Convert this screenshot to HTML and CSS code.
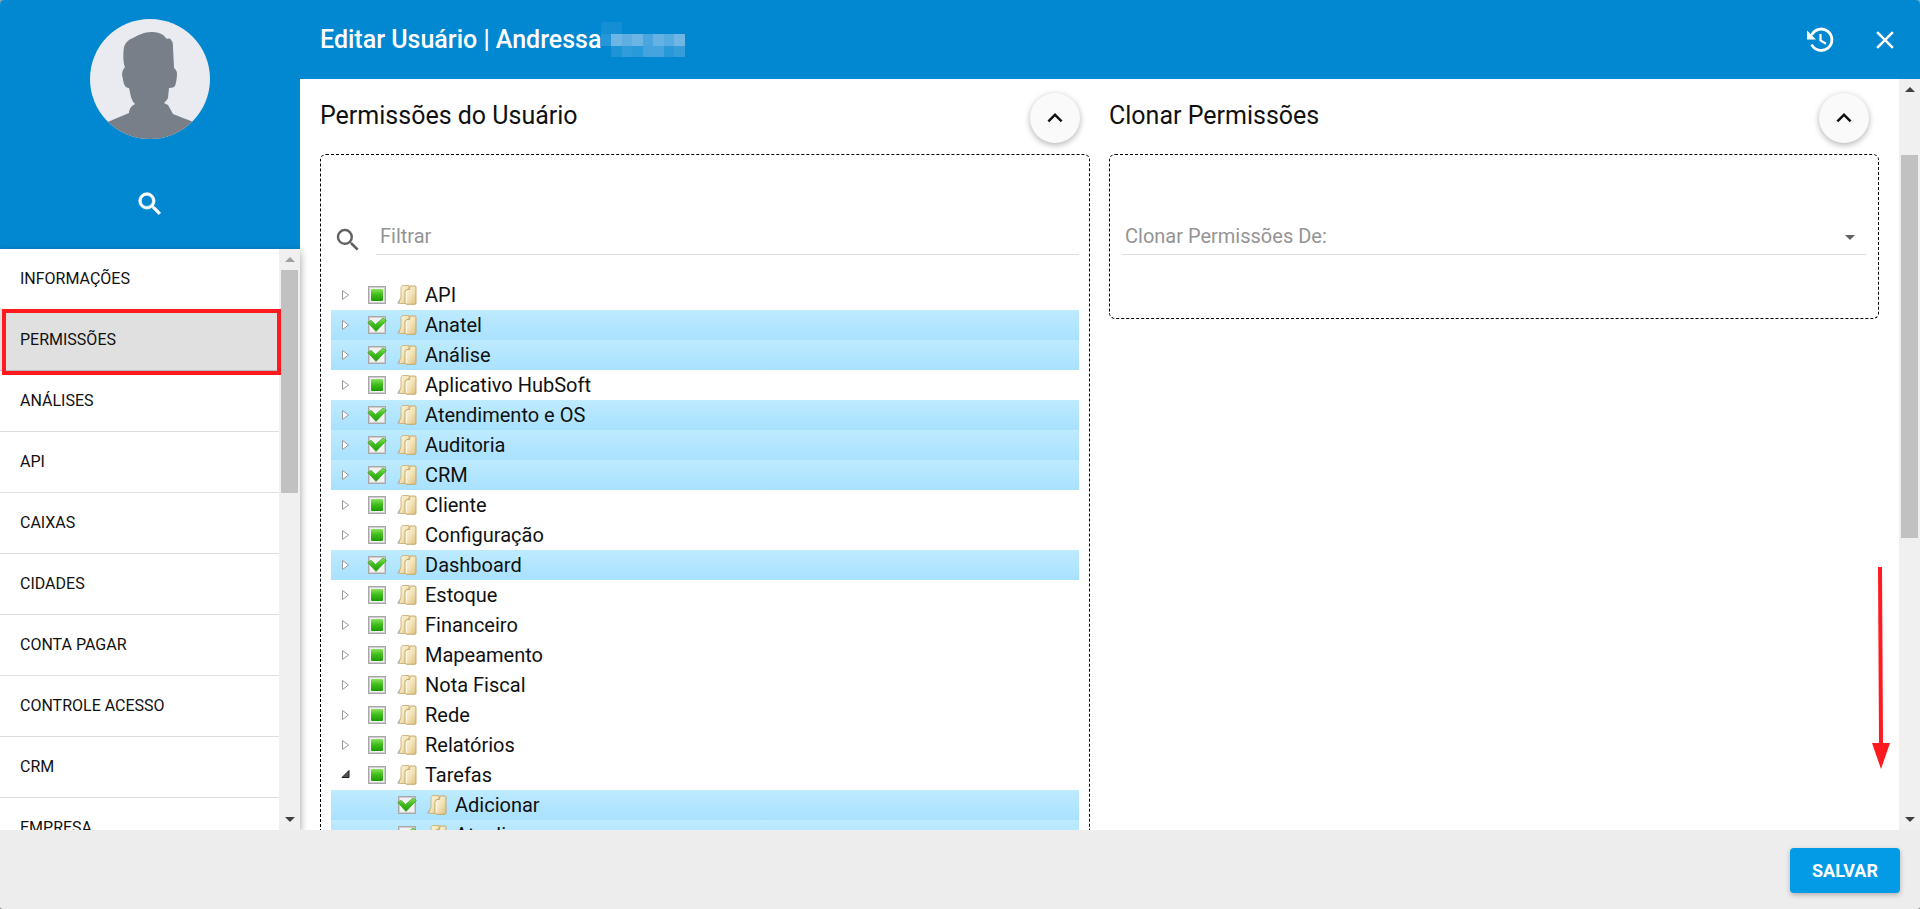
FILE: index.html
```
<!DOCTYPE html>
<html lang="pt-BR">
<head>
  <meta charset="UTF-8">
  <meta name="viewport" content="width=device-width, initial-scale=1.0">
  <title>Editar Usuário</title>
  <link rel="stylesheet" href="styles.css">
</head>
<body>
  <!-- Icon sprite -->
  <svg class="sprite" aria-hidden="true">
    <defs>
      <linearGradient id="green" x1="0" y1="0" x2="0" y2="1">
        <stop offset="0" stop-color="#8be05f"/>
        <stop offset="0.45" stop-color="#3fbf1c"/>
        <stop offset="1" stop-color="#1f9a08"/>
      </linearGradient>
      <linearGradient id="tan" x1="0" y1="0" x2="1" y2="1">
        <stop offset="0" stop-color="#fdf8e4"/>
        <stop offset="0.5" stop-color="#f3e4b8"/>
        <stop offset="1" stop-color="#dcbf7e"/>
      </linearGradient>
    </defs>
    <symbol id="i-search" viewBox="0 0 24 24">
      <path d="M15.5 14h-.79l-.28-.27A6.47 6.47 0 0 0 16 9.5 6.5 6.5 0 1 0 9.5 16c1.61 0 3.09-.59 4.23-1.57l.27.28v.79l5 4.99L20.49 19l-4.99-5zm-6 0C7.01 14 5 11.99 5 9.5S7.01 5 9.5 5 14 7.01 14 9.5 11.99 14 9.5 14z"/>
    </symbol>
    <symbol id="i-up" viewBox="0 0 24 24">
      <path d="M7.41 15.41L12 10.83l4.59 4.58L18 14l-6-6-6 6z"/>
    </symbol>
    <symbol id="i-close" viewBox="0 0 24 24">
      <path d="M19 6.41L17.59 5 12 10.59 6.41 5 5 6.41 10.59 12 5 17.59 6.41 19 12 13.41 17.59 19 19 17.59 13.41 12z"/>
    </symbol>
    <symbol id="i-history" viewBox="0 0 30 30">
      <path d="M6.600 10A10.700 10.700 0 1 1 6.600 19.500" fill="none" stroke="currentColor" stroke-width="2.800"/>
      <path d="M2 5.500v9h9z"/>
      <path d="M15.500 9v6.500l5.500 3.300" fill="none" stroke="currentColor" stroke-width="2.200"/>
    </symbol>
    <symbol id="i-closed" viewBox="0 0 10 12">
      <path d="M1.500 1.500v9L7.500 6z" fill="#fff" stroke="#9b9b9b"/>
    </symbol>
    <symbol id="i-opened" viewBox="0 0 10 12">
      <path d="M8 1.500v7H1z" fill="#555" stroke="#1e1e1e"/>
    </symbol>
    <symbol id="i-check" viewBox="0 0 20 20">
      <path d="M.8 7.500 4 5.300 8.500 9.500 16 3 19.400 5.500 9 16.500z" fill="url(#green)" stroke="#2f9a1a" stroke-width=".6"/>
    </symbol>
    <symbol id="i-partial" viewBox="0 0 20 20">
      <rect x="4" y="4" width="12" height="12" rx="1" fill="url(#green)"/>
    </symbol>
    <symbol id="i-folder" viewBox="0 0 20 22">
      <path d="M.5 19.500c0-2.500 2-3 3-6l2 6.500H2z" fill="#b4b6b8"/>
      <path d="M4 3.500 5.500 1.500h6.500v18H3.500c-1 0-1.600-.6-1.300-1.600L4 13z" fill="url(#tan)" stroke="#c9b078" stroke-width=".9"/>
      <path d="M8 7 10 5.500h2.500l.5-3.500h5c.5 0 1 .5 1 1v16c0 .8-.4 1.300-1 1.300H10c-1.200 0-2-.6-2-1.600z" fill="url(#tan)" stroke="#bfa262" stroke-width=".9"/>
      <path d="M9.300 8v10.500" stroke="#fffbee" stroke-width="1"/>
    </symbol>
  </svg>

  <div class="dialog">
    <aside class="sidebar">
      <div class="profile">
        <svg class="avatar" viewBox="0 0 120 120" role="img" aria-label="Avatar">
          <rect width="120" height="120" fill="#e9ebf0"/>
          <path d="M0 112C8 106 18 103 27 99l12-5c0-3 1-5 3-7l3-2c-2-2-3-4-4-7l-2-9c-2 0-3-1-4-2-2-3-2-8-3-11 0-3 1-6 3-8-2-4-2-14-1-20 2-5 4-7 9-9 5-3 12-6 18-6s9 1 12 3c2 1 2 3 4 4 2-1 4 0 4 1 2 2 2 4 2 7l1 21c2 2 3 3 3 6 0 4-1 9-2 12-1 1-3 2-6 2l-1 10c-1 2-3 4-4 5l4 2 5 9 10 4c9 3 18 7 27 13v8H0z" fill="#787f88"/>
        </svg>
        <button class="icon-btn" aria-label="Pesquisar"><svg class="icon bold"><use href="#i-search"/></svg></button>
      </div>
      <div class="scroll-area nav-area">
        <nav class="menu">
          <a href="#">INFORMAÇÕES</a>
          <a href="#" class="active">PERMISSÕES</a>
          <a href="#">ANÁLISES</a>
          <a href="#">API</a>
          <a href="#">CAIXAS</a>
          <a href="#">CIDADES</a>
          <a href="#">CONTA PAGAR</a>
          <a href="#">CONTROLE ACESSO</a>
          <a href="#">CRM</a>
          <a href="#">EMPRESA</a>
        </nav>
        <div class="scrollbar" aria-hidden="true">
          <span class="arrow up disabled"></span>
          <div class="track nav-track"><div class="thumb"></div></div>
          <span class="arrow down"></span>
        </div>
        <div class="highlight"></div>
      </div>
    </aside>

    <header class="toolbar">
      <h1>Editar Usuário | Andressa</h1>
      <svg class="mosaic" viewBox="0 0 84 35" aria-hidden="true">
        <path d="M0 0h21v12H0z" fill="#148fd4"/>
        <path d="M0 12h10v12H0z" fill="#2497d8"/>
        <path d="M10 12h11v12H10z" fill="#6eb5e4"/>
        <path d="M21 12h10v12H21z" fill="#5faee1"/>
        <path d="M31 12h11v12H31z" fill="#6bb4e4"/>
        <path d="M42 12h10v12H42z" fill="#4ba6df"/>
        <path d="M52 12h11v12H52z" fill="#66b1e3"/>
        <path d="M63 12h10v12H63z" fill="#56abe0"/>
        <path d="M73 12h11v12H73z" fill="#6fb6e4"/>
        <path d="M10 24h11v11H10z" fill="#1e94d7"/>
        <path d="M21 24h10v11H21z" fill="#319cda"/>
        <path d="M31 24h11v11H31z" fill="#2899d9"/>
        <path d="M42 24h21v11H42z" fill="#45a4de"/>
        <path d="M63 24h10v11H63z" fill="#2898d8"/>
        <path d="M73 24h11v11H73z" fill="#359eda"/>
      </svg>
      <div class="actions">
        <button class="icon-btn" aria-label="Histórico"><svg class="icon"><use href="#i-history"/></svg></button>
        <button class="icon-btn" aria-label="Fechar"><svg class="icon"><use href="#i-close"/></svg></button>
      </div>
    </header>

    <main class="scroll-area content">
      <div class="columns">
        <section>
          <div class="section-head">
            <h2>Permissões do Usuário</h2>
            <button class="fab" aria-label="Recolher"><svg class="icon"><use href="#i-up"/></svg></button>
          </div>
          <div class="box">
            <div class="filter">
              <label for="filter" aria-label="Filtrar"><svg class="icon"><use href="#i-search"/></svg></label>
              <input type="text" id="filter" placeholder="Filtrar">
            </div>
            <ul class="tree">
              <li><button class="toggle" aria-label="Expandir"><svg><use href="#i-closed"/></svg></button><label><span class="check"><input type="checkbox"><svg><use href="#i-partial"/></svg></span><svg class="folder"><use href="#i-folder"/></svg>API</label></li>
              <li class="selected"><button class="toggle" aria-label="Expandir"><svg><use href="#i-closed"/></svg></button><label><span class="check"><input type="checkbox" checked><svg><use href="#i-check"/></svg></span><svg class="folder"><use href="#i-folder"/></svg>Anatel</label></li>
              <li class="selected"><button class="toggle" aria-label="Expandir"><svg><use href="#i-closed"/></svg></button><label><span class="check"><input type="checkbox" checked><svg><use href="#i-check"/></svg></span><svg class="folder"><use href="#i-folder"/></svg>Análise</label></li>
              <li><button class="toggle" aria-label="Expandir"><svg><use href="#i-closed"/></svg></button><label><span class="check"><input type="checkbox"><svg><use href="#i-partial"/></svg></span><svg class="folder"><use href="#i-folder"/></svg>Aplicativo HubSoft</label></li>
              <li class="selected"><button class="toggle" aria-label="Expandir"><svg><use href="#i-closed"/></svg></button><label><span class="check"><input type="checkbox" checked><svg><use href="#i-check"/></svg></span><svg class="folder"><use href="#i-folder"/></svg>Atendimento e OS</label></li>
              <li class="selected"><button class="toggle" aria-label="Expandir"><svg><use href="#i-closed"/></svg></button><label><span class="check"><input type="checkbox" checked><svg><use href="#i-check"/></svg></span><svg class="folder"><use href="#i-folder"/></svg>Auditoria</label></li>
              <li class="selected"><button class="toggle" aria-label="Expandir"><svg><use href="#i-closed"/></svg></button><label><span class="check"><input type="checkbox" checked><svg><use href="#i-check"/></svg></span><svg class="folder"><use href="#i-folder"/></svg>CRM</label></li>
              <li><button class="toggle" aria-label="Expandir"><svg><use href="#i-closed"/></svg></button><label><span class="check"><input type="checkbox"><svg><use href="#i-partial"/></svg></span><svg class="folder"><use href="#i-folder"/></svg>Cliente</label></li>
              <li><button class="toggle" aria-label="Expandir"><svg><use href="#i-closed"/></svg></button><label><span class="check"><input type="checkbox"><svg><use href="#i-partial"/></svg></span><svg class="folder"><use href="#i-folder"/></svg>Configuração</label></li>
              <li class="selected"><button class="toggle" aria-label="Expandir"><svg><use href="#i-closed"/></svg></button><label><span class="check"><input type="checkbox" checked><svg><use href="#i-check"/></svg></span><svg class="folder"><use href="#i-folder"/></svg>Dashboard</label></li>
              <li><button class="toggle" aria-label="Expandir"><svg><use href="#i-closed"/></svg></button><label><span class="check"><input type="checkbox"><svg><use href="#i-partial"/></svg></span><svg class="folder"><use href="#i-folder"/></svg>Estoque</label></li>
              <li><button class="toggle" aria-label="Expandir"><svg><use href="#i-closed"/></svg></button><label><span class="check"><input type="checkbox"><svg><use href="#i-partial"/></svg></span><svg class="folder"><use href="#i-folder"/></svg>Financeiro</label></li>
              <li><button class="toggle" aria-label="Expandir"><svg><use href="#i-closed"/></svg></button><label><span class="check"><input type="checkbox"><svg><use href="#i-partial"/></svg></span><svg class="folder"><use href="#i-folder"/></svg>Mapeamento</label></li>
              <li><button class="toggle" aria-label="Expandir"><svg><use href="#i-closed"/></svg></button><label><span class="check"><input type="checkbox"><svg><use href="#i-partial"/></svg></span><svg class="folder"><use href="#i-folder"/></svg>Nota Fiscal</label></li>
              <li><button class="toggle" aria-label="Expandir"><svg><use href="#i-closed"/></svg></button><label><span class="check"><input type="checkbox"><svg><use href="#i-partial"/></svg></span><svg class="folder"><use href="#i-folder"/></svg>Rede</label></li>
              <li><button class="toggle" aria-label="Expandir"><svg><use href="#i-closed"/></svg></button><label><span class="check"><input type="checkbox"><svg><use href="#i-partial"/></svg></span><svg class="folder"><use href="#i-folder"/></svg>Relatórios</label></li>
              <li><button class="toggle" aria-label="Recolher"><svg><use href="#i-opened"/></svg></button><label><span class="check"><input type="checkbox"><svg><use href="#i-partial"/></svg></span><svg class="folder"><use href="#i-folder"/></svg>Tarefas</label></li>
              <li class="selected child"><label><span class="check"><input type="checkbox" checked><svg><use href="#i-check"/></svg></span><svg class="folder"><use href="#i-folder"/></svg>Adicionar</label></li>
              <li class="selected child"><label><span class="check"><input type="checkbox" checked><svg><use href="#i-check"/></svg></span><svg class="folder"><use href="#i-folder"/></svg>Atualizar</label></li>
            </ul>
          </div>
        </section>

        <section>
          <div class="section-head">
            <h2>Clonar Permissões</h2>
            <button class="fab" aria-label="Recolher"><svg class="icon"><use href="#i-up"/></svg></button>
          </div>
          <div class="box clone">
            <select aria-label="Clonar Permissões De:">
              <option>Clonar Permissões De:</option>
            </select>
            <span class="caret"></span>
          </div>
        </section>
      </div>
      <div class="scrollbar" aria-hidden="true">
        <span class="arrow up"></span>
        <div class="track main-track"><div class="thumb"></div></div>
        <span class="arrow down"></span>
      </div>
      <svg class="pointer" viewBox="0 0 18 202" aria-hidden="true">
        <path d="M6 0h4l1 176h7l-9 26-9-26h7z"/>
      </svg>
    </main>

    <footer class="footer">
      <button class="save">SALVAR</button>
    </footer>
  </div>
</body>
</html>
```
FILE: styles.css
```
:root {
  --primary: #0288d1;
  --accent: #039be5;
  --mark: #ff1a1f;
  --line: #dedede;
  --hint: #949494;
}

* {
  box-sizing: border-box;
}

body {
  margin: 0;
  font-family: Roboto, sans-serif;
  font-size: 20px;
  color: #111;
  background-color: #999;
}

button,
input,
select {
  font-family: inherit;
}

button {
  border: none;
  cursor: pointer;
}

h1,
h2 {
  margin: 0;
  font-size: 25px;
  line-height: 30px;
  font-weight: 400;
}

h1 {
  font-weight: 500;
}

.sprite {
  position: absolute;
  width: 0;
  height: 0;
}

.dialog {
  display: grid;
  grid-template-columns: 300px 1fr;
  grid-template-rows: auto minmax(0, 1fr) auto;
  height: 100vh;
  background-color: #fff;
  border-radius: 4px;
  overflow: hidden;
}

.icon {
  display: block;
  width: 30px;
  height: 30px;
  fill: currentColor;
}

.icon.bold {
  stroke: currentColor;
  stroke-width: 0.6;
}

.icon-btn {
  padding: 0;
  background: none;
  color: #fff;
}

/* Sidebar */
.sidebar {
  grid-row: 1 / 3;
  display: flex;
  flex-direction: column;
  min-height: 0;
  z-index: 1;
}

.profile {
  display: flex;
  flex-direction: column;
  align-items: center;
  gap: 50px;
  padding: 19px 0 30px;
  background-color: var(--primary);
}

.avatar {
  width: 120px;
  height: 120px;
  border-radius: 50%;
}

.scroll-area {
  position: relative;
  display: flex;
  min-height: 0;
}

.nav-area {
  flex: 1;
  box-shadow: 0 3px 8px rgba(0, 0, 0, 0.4);
  background-color: #fff;
}

.menu {
  flex: 1;
  overflow: hidden;
}

.menu a {
  display: block;
  padding: 0 20px;
  font-size: 16px;
  line-height: 60px;
  color: #111;
  text-decoration: none;
  border-bottom: 1px solid var(--line);
}

.menu a.active {
  background-color: #e0e0e0;
  border-color: #bbb;
}

.highlight {
  position: absolute;
  top: 60px;
  left: 2px;
  right: 19px;
  height: 66px;
  border: 4px solid var(--mark);
}

/* Scrollbars */
.scrollbar {
  display: flex;
  flex-direction: column;
  width: 21px;
  background-color: #f0f0f0;
}

.arrow {
  display: flex;
  justify-content: center;
  align-items: center;
  height: 21px;
}

.arrow::before {
  content: "";
  border: 5px solid transparent;
}

.arrow.up::before {
  border-top: none;
  border-bottom-color: #404040;
}

.arrow.down::before {
  border-bottom: none;
  border-top-color: #404040;
}

.arrow.disabled::before {
  border-bottom-color: #a0a0a0;
}

.track {
  flex: 1;
  display: grid;
  padding: 0 2px;
}

.nav-track {
  grid-template-rows: 223fr 316fr;
}

.main-track {
  grid-template-rows: 55fr 383fr 271fr;
}

.main-track .thumb {
  grid-row: 2;
}

.thumb {
  background-color: #c1c1c1;
}

/* Header */
.toolbar {
  display: flex;
  align-items: center;
  height: 79px;
  padding: 0 20px;
  background-color: var(--primary);
  color: #fff;
}

.mosaic {
  width: 84px;
  height: 35px;
}

.actions {
  display: flex;
  gap: 35px;
  margin-left: auto;
}

/* Content */
.columns {
  flex: 1;
  display: grid;
  grid-template-columns: 1fr 1fr;
  gap: 19px;
  align-items: start;
  padding: 0 20px;
  overflow: hidden;
}

.section-head {
  display: flex;
  justify-content: space-between;
  align-items: flex-start;
  height: 75px;
  padding: 14px 10px 0 0;
}

.section-head h2 {
  padding-top: 8px;
}

.fab {
  display: flex;
  justify-content: center;
  align-items: center;
  width: 50px;
  height: 50px;
  padding: 0;
  border-radius: 50%;
  background-color: #fafafa;
  color: #111;
  box-shadow: 0 2px 6px rgba(0, 0, 0, 0.3);
}

.box {
  padding: 60px 10px 20px;
  border: 1px dashed #000;
  border-radius: 6px;
}

.filter {
  display: flex;
  align-items: flex-end;
  gap: 13px;
  color: #616161;
}

.filter label {
  padding-left: 2px;
}

.filter input,
.clone select {
  width: 100%;
  height: 40px;
  padding: 2px 4px 0;
  border: none;
  border-bottom: 1px solid var(--line);
  border-radius: 0;
  outline: none;
  background: none;
  font-size: 20px;
  color: #111;
}

.filter input::placeholder {
  color: var(--hint);
}

.clone {
  position: relative;
  height: 165px;
  padding: 60px 12px 20px;
}

.clone select {
  appearance: none;
  padding: 2px 3px 0;
  color: var(--hint);
}

.caret {
  position: absolute;
  top: 80px;
  right: 23px;
  border: 5px solid transparent;
  border-top-color: #616161;
  border-bottom: none;
}

/* Tree */
.tree {
  list-style: none;
  margin: 25px 0 0;
  padding: 0;
}

.tree li {
  display: flex;
  height: 30px;
}

.tree li.selected {
  background: linear-gradient(#beebff, #a8e1ff);
}

.tree li.child {
  padding-left: 60px;
}

.tree label {
  display: flex;
  align-items: center;
}

.toggle {
  display: flex;
  justify-content: center;
  align-items: center;
  width: 30px;
  padding: 0;
  background: none;
}

.toggle svg {
  width: 10px;
  height: 12px;
}

.check {
  display: grid;
  place-items: center;
  width: 32px;
}

.check input,
.check svg {
  grid-area: 1 / 1;
}

.check input {
  appearance: none;
  width: 18px;
  height: 18px;
  margin: 0;
  border: 1px solid #a8a8a8;
  background-color: #f2f2f2;
  box-shadow: inset 0 0 0 1px #cfcfcf;
}

.check svg {
  width: 20px;
  height: 20px;
  pointer-events: none;
}

.folder {
  width: 20px;
  height: 22px;
  margin: 0 8px 0 4px;
}

/* Arrow drawn over the page */
.pointer {
  position: absolute;
  right: 30px;
  bottom: 61px;
  width: 18px;
  height: 202px;
  fill: var(--mark);
}

/* Footer */
.footer {
  grid-column: 1 / -1;
  display: flex;
  justify-content: flex-end;
  padding: 18px 20px 16px;
  background-color: #ededed;
  z-index: 2;
}

.save {
  width: 110px;
  height: 45px;
  border-radius: 4px;
  background-color: var(--accent);
  color: #fff;
  font-size: 18px;
  font-weight: 700;
  box-shadow: 0 2px 5px rgba(0, 0, 0, 0.26);
}
```
